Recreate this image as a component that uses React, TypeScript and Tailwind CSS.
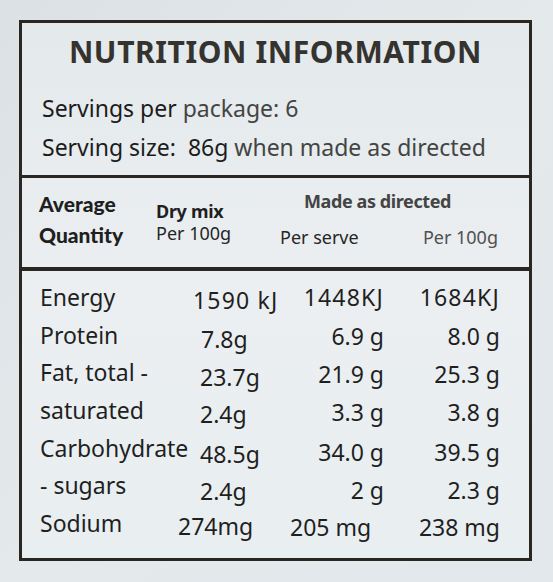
import React from "react";

type Row = {
  label: string;
  dry: string;
  serve: string;
  per100: string;
  dryPad: string;
  dryTop: string;
  valTop: string;
  servePr?: string;
  track?: string;
};

const rows: Row[] = [
  { label: "Energy", dry: "1590 kJ", serve: "1448KJ", per100: "1684KJ", dryPad: "pl-[15px]", dryTop: "pt-[3px]", valTop: "pt-0", track: "tracking-[1.2px]" },
  { label: "Protein", dry: "7.8g", serve: "6.9 g", per100: "8.0 g", dryPad: "pl-[23px]", dryTop: "pt-[4px]", valTop: "pt-[1px]" },
  { label: "Fat, total -", dry: "23.7g", serve: "21.9 g", per100: "25.3 g", dryPad: "pl-[22px]", dryTop: "pt-[5px]", valTop: "pt-[2px]" },
  { label: "saturated", dry: "2.4g", serve: "3.3 g", per100: "3.8 g", dryPad: "pl-[22px]", dryTop: "pt-[4px]", valTop: "pt-[2px]" },
  { label: "Carbohydrate", dry: "48.5g", serve: "34.0 g", per100: "39.5 g", dryPad: "pl-[22px]", dryTop: "pt-[6px]", valTop: "pt-[4px]" },
  { label: "- sugars", dry: "2.4g", serve: "2 g", per100: "2.3 g", dryPad: "pl-[22px]", dryTop: "pt-[6px]", valTop: "pt-[5px]" },
  { label: "Sodium", dry: "274mg", serve: "205 mg", per100: "238 mg", dryPad: "pl-0", dryTop: "pt-[3px]", valTop: "pt-[4px]", servePr: "pr-[14px]" },
];

export default function App() {
  return (
    <div className="w-[553px] h-[582px] overflow-hidden bg-gradient-to-br from-[#dbe1e4] via-[#e4e9ec] to-[#e2e8eb] pt-[20px] pl-[19px] font-['Noto_Sans',sans-serif] text-[#1f1f1f]">
      <div className="w-[513px] border-[3px] border-[#2a2723] bg-gradient-to-b from-[#e4e9eb] via-[#ebeff1] to-[#e9eef0]">
        {/* Title section */}
        <div className="border-b-[3px] border-[#2a2723] pt-[14px] pb-[8px]">
          <div className="text-center text-[30px] leading-[30px] font-bold tracking-[0.6px] text-[#35332f]">
            NUTRITION INFORMATION
          </div>
          <div className="mt-[22px] pl-[20px] text-[23px] leading-[39px]">
            <div>
              <span className="text-[#1c1c1c]">Servings per </span>
              <span className="text-[#444]">package: 6</span>
            </div>
            <div>
              <span className="text-[#1c1c1c]">Serving size:&nbsp; 86g </span>
              <span className="text-[#444]">when made as directed</span>
            </div>
          </div>
        </div>

        {/* Header section */}
        <div className="flex h-[93px] border-b-[4px] border-[#2a2723] pl-[17px]">
          <div className="w-[117px] pt-[10px] font-['Lato',sans-serif] font-black text-[21px] leading-[31px] text-[#1f1f1f]">
            <div>Average</div>
            <div>Quantity</div>
          </div>
          <div className="w-[124px] pt-[22px] leading-[22px]">
            <div className="text-[18px] font-bold tracking-[-0.3px] text-[#1f1f1f]">Dry mix</div>
            <div className="text-[18px] text-[#262626]">Per 100g</div>
          </div>
          <div className="w-[218px] pt-[12px]">
            <div className="pl-[24px] text-[18px] leading-[22px] font-bold tracking-[-0.4px] text-[#444]">
              Made as directed
            </div>
            <div className="mt-[14px] flex justify-between text-[18px] leading-[22px]">
              <span className="text-[#262626]">Per serve</span>
              <span className="text-[#505050]">Per 100g</span>
            </div>
          </div>
        </div>

        {/* Body */}
        <div className="grid grid-cols-[138px_112px_94px_116px] auto-rows-[37.7px] pl-[18px] pt-[8px] pb-[15px] text-[23px] leading-[37.7px] text-[#1f1f1f]">
          {rows.map((r) => (
            <React.Fragment key={r.label}>
              <div className="whitespace-nowrap">{r.label}</div>
              <div className={`whitespace-nowrap ${r.dryPad} ${r.dryTop} ${r.track ?? ""}`}>{r.dry}</div>
              <div className={`whitespace-nowrap text-right ${r.valTop} ${r.servePr ?? ""} ${r.track ?? ""}`}>{r.serve}</div>
              <div className={`whitespace-nowrap text-right ${r.valTop} ${r.track ?? ""}`}>{r.per100}</div>
            </React.Fragment>
          ))}
        </div>
      </div>
    </div>
  );
}
